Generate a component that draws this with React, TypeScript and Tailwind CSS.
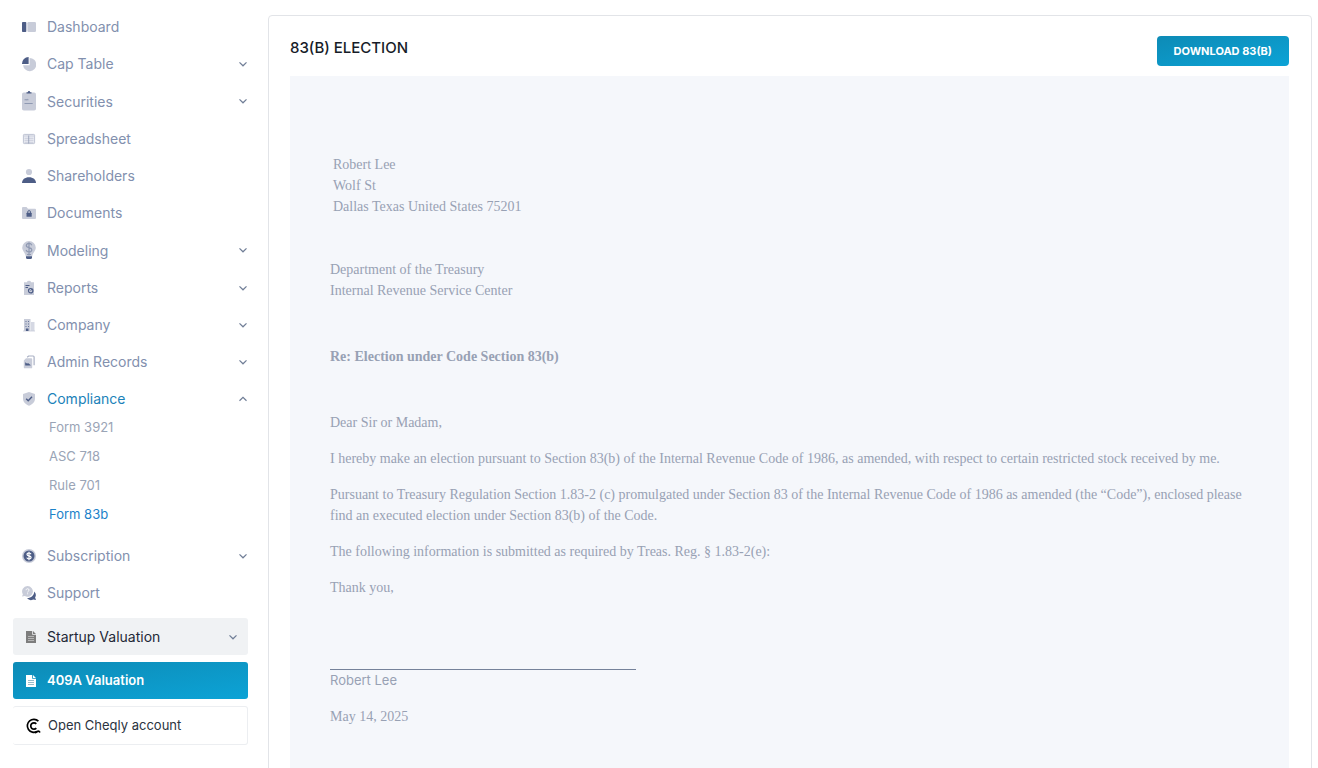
import { useState } from 'react';
import type { ReactNode } from 'react';

const DARK = '#4d5d86';
const MID = '#8f99b2';
const LIGHT = '#c8ccd9';

const Icon = ({ children, tall }: { children: ReactNode; tall?: boolean }) => (
  <svg
    viewBox={tall ? '0 0 14 22' : '0 0 14 20'}
    className={tall ? 'w-3.5 h-[22px] shrink-0' : 'w-3.5 h-5 shrink-0'}
    fill="none"
    aria-hidden="true"
  >
    {children}
  </svg>
);

const Chevron = ({ up }: { up?: boolean }) => (
  <svg viewBox="0 0 10 10" className="w-2.5 h-2.5 shrink-0" fill="none" stroke="#6f7d96" strokeWidth="1.2" aria-hidden="true">
    <path d={up ? 'M1.5 6.8 5 3.4l3.5 3.4' : 'M1.5 3.4 5 6.8l3.5-3.4'} />
  </svg>
);

const icons = {
  dashboard: (
    <Icon>
      <rect x="0" y="5" width="4.3" height="10" rx="0.8" fill={DARK} />
      <rect x="5.4" y="5" width="8.6" height="10" rx="1.2" fill={LIGHT} />
    </Icon>
  ),
  pie: (
    <Icon>
      <path d="M7.6 4a6.600 6.600 0 1 1-6.500 7.200h6.500z" fill={LIGHT} />
      <path d="M6.600 3v6.900H0A6.800 6.800 0 0 1 6.600 3z" fill={DARK} />
    </Icon>
  ),
  clipboard: (
    <Icon tall>
      <rect x="0" y="2.500" width="14" height="18" rx="1.800" fill={LIGHT} />
      <path d="M4.500 3.600V2.200h1.300a1.200 1.200 0 0 1 2.400 0h1.300v1.400z" fill={DARK} />
      <path d="M2.500 9.800h4M2.500 13.500h8.200" stroke={MID} strokeWidth="1" />
      <path d="M3.500 9l1 1 1.500-1" stroke={MID} strokeWidth="0.5" />
    </Icon>
  ),
  sheet: (
    <Icon>
      <rect x="1.400" y="5.400" width="11.200" height="9.200" rx="0.8" fill="#eceef4" stroke="#bfc4d3" strokeWidth="1" />
      <path d="M1.500 7h11M2.500 9.200h9M2.500 11.200h9M2.500 13.200h9" stroke={LIGHT} strokeWidth="1.100" />
      <path d="M6.700 6.500v8" stroke={MID} strokeWidth="0.8" />
    </Icon>
  ),
  person: (
    <Icon>
      <circle cx="7" cy="6" r="3.100" fill={LIGHT} />
      <path d="M0 17c0-3.600 2.800-5.800 7-5.800s7 2.200 7 5.800z" fill={DARK} />
    </Icon>
  ),
  folder: (
    <Icon>
      <path d="M0 5a1 1 0 0 1 1-1h3.500l1.500 1.800h7a1 1 0 0 1 1 1V15a1 1 0 0 1-1 1H1a1 1 0 0 1-1-1z" fill={LIGHT} />
      <rect x="4.500" y="9.800" width="5.200" height="4" rx="0.5" fill={DARK} />
      <path d="M5.700 10V9a1.400 1.400 0 0 1 2.800 0v1" stroke={DARK} strokeWidth="0.9" />
    </Icon>
  ),
  bulb: (
    <Icon tall>
      <path d="M7 2a6.800 6.800 0 0 1 6.800 6.700c0 3.200-3.200 4.900-3.600 8.800H3.800C3.400 13.600.2 11.900.2 8.700A6.800 6.800 0 0 1 7 2z" fill={LIGHT} />
      <path d="M9.800 6.200C9.300 4.900 8.300 4.400 7 4.400c-1.600 0-2.700.8-2.700 2.100 0 3 5.500 1.400 5.500 4.300 0 1.400-1.200 2.200-2.800 2.200-1.500 0-2.500-.7-2.900-2M7 3.200v13.300M5 15.500h4" stroke={MID} strokeWidth="1.200" />
      <path d="M4 17.300h6v1.100a1.500 1.500 0 0 1-1.500 1.500h-3A1.500 1.500 0 0 1 4 18.400z" fill={DARK} />
    </Icon>
  ),
  report: (
    <Icon>
      <path d="M2 4.200h3a2 1.400 0 0 1 4 0h3V17H2z" fill={LIGHT} />
      <path d="M3.500 7.500h4M3.500 9.500h2.500" stroke={DARK} strokeWidth="1.200" />
      <circle cx="8.700" cy="12.700" r="2.200" stroke={DARK} strokeWidth="1.200" />
      <path d="M8.700 12.700l1.500-1.800" stroke={DARK} strokeWidth="1" />
    </Icon>
  ),
  building: (
    <Icon>
      <path d="M2 4h6.500v12H2z" fill={LIGHT} />
      <path d="M9 7h3.500v9H9z" fill="#d5d8e3" />
      <path d="M1 16h12" stroke={LIGHT} strokeWidth="0.8" />
      <path d="M3.500 6.500h1M6 6.500h1M3.500 9h1M6 9h1M3.500 11.500h1M6 11.500h1" stroke="#66749a" strokeWidth="1.200" />
      <path d="M3.900 13.500h2.600V16H3.900z" fill={DARK} />
    </Icon>
  ),
  records: (
    <Icon>
      <path d="M5.200 5.300 6.600 4h4.600a.9.9 0 0 1 .9.900v8.300" stroke="#a9b0c4" strokeWidth="1.200" />
      <path d="M4 6.300h5.300a.9.900 0 0 1 .9.900V15.400a.9.900 0 0 1-.9.900H2.700a.9.900 0 0 1-.9-.9V8.500z" fill={LIGHT} />
      <path d="M3.200 13.600v-3.400l1.700 1.400 1.500-.3 2.200 1.600v.7z" fill={DARK} />
    </Icon>
  ),
  shield: (
    <Icon>
      <path d="M7 3l6 2v4.500c0 3.500-2.600 6-6 7.300-3.400-1.300-6-3.800-6-7.300V5z" fill={LIGHT} />
      <path d="M4.200 9.800l2 2L10 7.800" stroke={DARK} strokeWidth="1.400" />
    </Icon>
  ),
  dollar: (
    <Icon>
      <circle cx="7" cy="10" r="7" fill={LIGHT} />
      <circle cx="7" cy="10" r="5.500" fill={DARK} />
      <path d="M9 8.200C8.700 7.300 8 7 7 7c-1.200 0-2 .5-2 1.400 0 2 4.100 1.100 4.100 3.100 0 1-.9 1.500-2.100 1.500s-1.900-.4-2.200-1.400M7 5.800v8.400" stroke="#fff" strokeWidth="1.200" />
    </Icon>
  ),
  support: (
    <Icon>
      <path d="M12.300 8.500a5 5 0 0 1 .8 6l.9 2.600-2.800-.5a5 5 0 0 1-6.200-1.500c4 .2 7-2.600 7.300-6.600z" fill={DARK} />
      <path d="M5.500 3a5.400 5.400 0 1 1-2.700 10.100L0 13.600l.9-2.400A5.400 5.400 0 0 1 5.500 3z" fill={LIGHT} />
      <path d="M4.100 7.200c0-.9.600-1.500 1.500-1.500s1.500.6 1.500 1.400c0 1-1.500 1.100-1.500 2.300M5.600 10.300v1" stroke="#fff" strokeWidth="0.9" />
    </Icon>
  ),
};

const topItems = [
  { label: 'Dashboard', icon: icons.dashboard },
  { label: 'Cap Table', icon: icons.pie, menu: true },
  { label: 'Securities', icon: icons.clipboard, menu: true },
  { label: 'Spreadsheet', icon: icons.sheet },
  { label: 'Shareholders', icon: icons.person },
  { label: 'Documents', icon: icons.folder },
  { label: 'Modeling', icon: icons.bulb, menu: true },
  { label: 'Reports', icon: icons.report, menu: true },
  { label: 'Company', icon: icons.building, menu: true },
  { label: 'Admin Records', icon: icons.records, menu: true },
];

const complianceItems = ['Form 3921', 'ASC 718', 'Rule 701', 'Form 83b'];

const FileIcon = ({ className, lines }: { className: string; lines: string }) => (
  <svg viewBox="0 0 10 12" className={`w-2.5 h-3 shrink-0 ${className}`} aria-hidden="true">
    <path d="M0 0h6.200v3.800H10V12H0zM7 0l3 3H7z" fill="currentColor" />
    <path d="M2 5.500h6M2 7.500h6M2 9.500h6" stroke={lines} strokeWidth="0.8" />
  </svg>
);

const NavItem = ({ label, icon, menu }: { label: string; icon: ReactNode; menu?: boolean }) => {
  const inner = (
    <>
      {icon}
      <span className="flex-1 text-left">{label}</span>
      {menu && <Chevron />}
    </>
  );
  const style = 'flex items-center gap-[11px] w-full py-2 pl-[9px] text-[#8290ae]';

  return (
    <li>
      {menu ? (
        <button type="button" className={style}>{inner}</button>
      ) : (
        <a href="#" className={style}>{inner}</a>
      )}
    </li>
  );
};

const Sidebar = () => {
  const [open, setOpen] = useState(true);

  return (
    <nav className="w-[248px] shrink-0 pl-[13px] pt-2 text-sm leading-[21px]">
      <ul>
        {topItems.map((item) => (
          <NavItem key={item.label} {...item} />
        ))}
        <li>
          <button
            type="button"
            aria-expanded={open}
            onClick={() => setOpen(!open)}
            className="flex items-center gap-[11px] w-full py-2 pl-[9px] text-[#1b82b9]"
          >
            {icons.shield}
            <span className="flex-1 text-left">Compliance</span>
            <Chevron up={open} />
          </button>
          {open && (
            <ul className="pl-9 pb-3 space-y-2 text-[13px] leading-[21px]">
              {complianceItems.map((label) => (
                <li key={label}>
                  <a href="#" className={label === 'Form 83b' ? 'block text-[#1b82c9]' : 'block text-[#9aa4b6]'}>
                    {label}
                  </a>
                </li>
              ))}
            </ul>
          )}
        </li>
        <NavItem label="Subscription" icon={icons.dollar} menu />
        <NavItem label="Support" icon={icons.support} />
      </ul>

      {/* Shortcuts */}
      <div className="mt-[7px] space-y-[7px]">
        <button type="button" className="flex items-center gap-[11px] w-full py-2 pl-[13px] pr-2.5 rounded-[3px] bg-[#f0f2f4] text-[#1f2937]">
          <FileIcon className="text-[#7d7d7d]" lines="#c4c4c4" />
          <span className="flex-1 text-left">Startup Valuation</span>
          <Chevron />
        </button>
        <a href="#" className="flex items-center gap-[11px] py-2 pl-[13px] rounded-[3px] bg-linear-to-br from-[#0d8bb6] to-[#0ca3d6] text-white text-[13px] leading-[21px] font-semibold">
          <FileIcon className="text-white" lines="#7fa9bb" />
          409A Valuation
        </a>
        <a href="#" className="flex items-center gap-[7px] py-2 pl-[13px] rounded-[3px] border border-l-0 border-[#eceef1] text-[#2b3340] text-[13px] leading-[21px]">
          <svg viewBox="0 0 15 16" className="w-[15px] h-4 shrink-0" fill="none" stroke="#000" strokeWidth="1.7" aria-hidden="true">
            <path d="M12.400 3.200A6.500 6.500 0 1 0 11 13.500" />
            <path d="M10.300 5.800A3.200 3.200 0 1 0 10.300 10.200" />
            <path d="M9 14.600c1.500-.2 2.300-1.500 3.300-1.500.7 0 1 .9 2 .9" />
          </svg>
          Open Cheqly account
        </a>
      </div>
    </nav>
  );
};

const Letter = () => (
  <article className="mt-2.5 bg-[#f5f7fb] px-10 pt-[78px] pb-20 font-['Liberation_Serif',serif] text-sm leading-[21px] text-[#98a1b4]">
    <address className="not-italic pl-[3px]">
      <p>Robert Lee</p>
      <p>Wolf St</p>
      <p>Dallas Texas United States 75201</p>
    </address>
    <div className="mt-[42px]">
      <p>Department of the Treasury</p>
      <p>Internal Revenue Service Center</p>
    </div>
    <p className="my-[45px] font-bold">Re: Election under Code Section 83(b)</p>
    <div className="space-y-[15px]">
      <p>Dear Sir or Madam,</p>
      <p>
        I hereby make an election pursuant to Section 83(b) of the Internal Revenue Code of 1986, as amended, with
        respect to certain restricted stock received by me.
      </p>
      <p>
        Pursuant to Treasury Regulation Section 1.83-2 (c) promulgated under Section 83 of the Internal Revenue Code of
        1986 as amended (the “Code”), enclosed please find an executed election under Section 83(b) of the Code.
      </p>
      <p>The following information is submitted as required by Treas. Reg. § 1.83-2(e):</p>
      <p>Thank you,</p>
    </div>
    <p className="mt-[71px] w-[306px] border-t border-[#75829a] font-['Inter',sans-serif] text-[13px] leading-[21px]">Robert Lee</p>
    <p className="mt-[15px]">May 14, 2025</p>
  </article>
);

const App = () => {
  return (
    <div className="flex gap-5 h-screen overflow-hidden bg-white font-['Inter',sans-serif]">
      <Sidebar />
      <main className="flex-1 min-w-0 pt-[15px] pr-1.5">
        <section className="rounded border border-[#e2e4e8] pl-[21px] pr-[22px] pt-5">
          <header className="flex items-start justify-between">
            <h1 className="text-[15px] leading-6 font-medium text-[#171c28]">83(B) ELECTION</h1>
            <button type="button" className="h-[30px] px-[17px] rounded bg-linear-to-br from-[#0d8bb6] to-[#0ca3d6] text-white text-[11px] font-bold">
              DOWNLOAD 83(B)
            </button>
          </header>
          <Letter />
        </section>
      </main>
    </div>
  );
};

export default App;
